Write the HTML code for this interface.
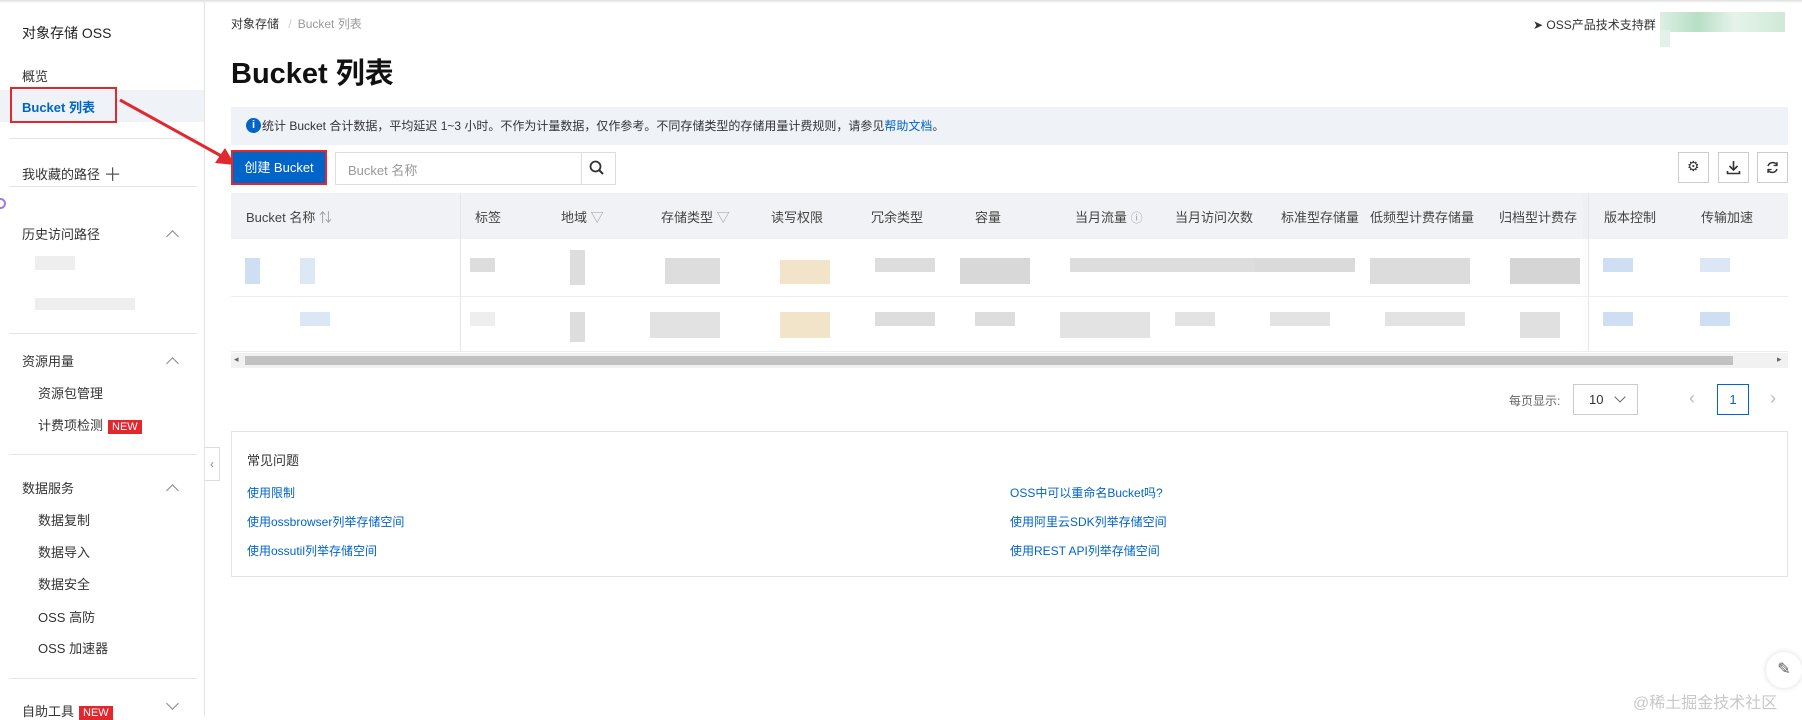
<!DOCTYPE html>
<html><head><meta charset="utf-8"><style>
*{margin:0;padding:0;box-sizing:border-box}
body{width:1802px;height:716px;overflow:hidden;background:#fff;font-family:"Liberation Sans","Noto Sans CJK SC",sans-serif;font-size:13px;color:#333;position:relative}
.a{position:absolute;white-space:nowrap}
.side{position:absolute;left:0;top:0;width:205px;height:716px;border-right:1px solid #e3e3e3}
.hr{position:absolute;left:9px;width:188px;height:1px;background:#e5e5e5}
.new{background:#e0282e;color:#fff;font-size:11px;padding:0 4px;margin-left:5px;line-height:14px;display:inline-block}
.chev{position:absolute;left:168px;width:9px;height:9px;border-left:1.3px solid #888;border-top:1.3px solid #888;transform:rotate(45deg)}
.chevd{transform:rotate(225deg)}
.blk{position:absolute;background:#ddd}
a{color:#0064c8;text-decoration:none}
.ib{position:absolute;top:152px;width:31px;height:31px;border:1px solid #ccc;background:#fff}
</style></head><body>
<div class="a" style="left:0;top:0;width:1802px;height:3px;background:linear-gradient(#ddd,#fff)"></div>
<div class="side">
<div class="a" style="left:22px;top:23px;font-size:14px;color:#222">对象存储 OSS</div>
<div class="a" style="left:22px;top:66px;color:#333">概览</div>
<div class="a" style="left:0;top:90px;width:204px;height:32px;background:#eff3f8"></div>
<div class="a" style="left:10px;top:87px;width:107px;height:36px;border:2px solid #e0282e"></div>
<div class="a" style="left:22px;top:97px;color:#0064c8;font-weight:bold">Bucket 列表</div>
<div class="hr" style="top:138px"></div>
<div class="a" style="left:22px;top:161px">我收藏的路径 <span style="font-size:18px;color:#555;vertical-align:-2px">＋</span></div>
<div class="hr" style="top:186px"></div>
<div class="a" style="left:22px;top:224px">历史访问路径</div><div class="chev" style="top:232px"></div>
<div class="blk" style="left:35px;top:256px;width:40px;height:14px;background:#eee"></div>
<div class="blk" style="left:35px;top:298px;width:100px;height:12px;background:#eee"></div>
<div class="hr" style="top:333px"></div>
<div class="a" style="left:22px;top:351px">资源用量</div><div class="chev" style="top:359px"></div>
<div class="a" style="left:38px;top:383px">资源包管理</div>
<div class="a" style="left:38px;top:415px">计费项检测<span class="new">NEW</span></div>
<div class="hr" style="top:454px"></div>
<div class="a" style="left:22px;top:478px">数据服务</div><div class="chev" style="top:486px"></div>
<div class="a" style="left:38px;top:510px">数据复制</div>
<div class="a" style="left:38px;top:542px">数据导入</div>
<div class="a" style="left:38px;top:574px">数据安全</div>
<div class="a" style="left:38px;top:607px">OSS 高防</div>
<div class="a" style="left:38px;top:638px">OSS 加速器</div>
<div class="hr" style="top:678px"></div>
<div class="a" style="left:22px;top:701px">自助工具<span class="new">NEW</span></div><div class="chev chevd" style="top:699px"></div>
</div>
<div class="a" style="left:205px;top:447px;width:15px;height:34px;border:1px solid #ddd;border-left:none;background:#fff;color:#888;font-size:12px;text-align:center;line-height:32px">‹</div>
<div class="a" style="left:-5px;top:198px;width:11px;height:11px;border:2px solid #9b7bea;border-radius:50%"></div>
<!-- red arrow -->
<svg class="a" style="left:115px;top:95px" width="125" height="75"><line x1="5" y1="5" x2="110" y2="63" stroke="#e0282e" stroke-width="3"/><polygon points="120,70 100,68 110,53" fill="#e0282e"/></svg>

<div class="a" style="left:231px;top:15px;font-size:12px;color:#333">对象存储 <span style="color:#ccc;margin:0 6px">/</span><span style="color:#999">Bucket 列表</span></div>
<div class="a" style="left:231px;top:50px;font-size:29px;font-weight:bold;color:#111">Bucket 列表</div>
<div class="a" style="left:1533px;top:16px;font-size:12px;color:#333">➤ OSS产品技术支持群</div>
<div class="a" style="left:1660px;top:12px;width:125px;height:20px;background:linear-gradient(90deg,#dcefe3,#b7dfc6 30%,#e6f3ea 60%,#cfe9d8)"></div>
<div class="a" style="left:1660px;top:30px;width:10px;height:17px;background:#e3f2e8"></div>

<div class="a" style="left:231px;top:107px;width:1557px;height:38px;background:#eff3f8"></div>
<div class="a" style="left:246px;top:118px;width:15px;height:15px;border-radius:50%;background:#0064c8;color:#fff;font-size:11px;font-weight:bold;text-align:center;line-height:15px">i</div>
<div class="a" style="left:262px;top:117px;font-size:12px;color:#333">统计 Bucket 合计数据，平均延迟 1~3 小时。不作为计量数据，仅作参考。不同存储类型的存储用量计费规则，请参见<a>帮助文档</a>。</div>

<div class="a" style="left:231px;top:150px;width:96px;height:35px;border:2px solid #e0282e;background:#0064c8;padding:2px"></div>
<div class="a" style="left:231px;top:150px;width:96px;height:35px;color:#fff;text-align:center;line-height:35px;font-size:13px">创建 Bucket</div>
<div class="a" style="left:335px;top:152px;width:281px;height:33px;border:1px solid #ddd"></div>
<div class="a" style="left:348px;top:160px;color:#999">Bucket 名称</div>
<div class="a" style="left:581px;top:152px;width:1px;height:33px;background:#ddd"></div>
<svg class="a" style="left:589px;top:160px" width="16" height="16"><circle cx="6.5" cy="6.5" r="5" fill="none" stroke="#333" stroke-width="1.8"/><line x1="10" y1="10" x2="14" y2="14" stroke="#333" stroke-width="2"/></svg>
<div class="ib" style="left:1678px"></div><div class="ib" style="left:1718px"></div><div class="ib" style="left:1757px"></div>
<div class="a" style="left:1687px;top:158px;font-size:14px;color:#333">⚙</div>
<svg class="a" style="left:1726px;top:160px" width="15" height="15"><path d="M7.5 1v9M3.5 6l4 4 4-4M1.5 11v2.5h12V11" fill="none" stroke="#333" stroke-width="1.6"/></svg>
<svg class="a" style="left:1765px;top:160px" width="15" height="15"><path d="M12 5a5 5 0 0 0-9 1M3 10a5 5 0 0 0 9-1" fill="none" stroke="#333" stroke-width="1.5"/><path d="M12 2v3.5H8.5M3 13V9.5h3.5" fill="none" stroke="#333" stroke-width="1.3"/></svg>

<div class="a" style="left:231px;top:193px;width:1557px;height:46px;background:#f0f2f5"></div>
<div class="a" style="left:460px;top:193px;width:1px;height:158px;background:#e6e6e6"></div>
<div class="a" style="left:1588px;top:193px;width:1px;height:158px;background:#e6e6e6;box-shadow:-3px 0 4px rgba(0,0,0,.06)"></div>
<div class="a" style="left:231px;top:207px;width:1557px;font-size:13px;color:#444">
<span class="a" style="left:15px">Bucket 名称 <span style="color:#999">⇅</span></span>
<span class="a" style="left:244px">标签</span><span class="a" style="left:330px">地域 <span style="color:#999">▽</span></span>
<span class="a" style="left:430px">存储类型 <span style="color:#999">▽</span></span><span class="a" style="left:540px">读写权限</span>
<span class="a" style="left:640px">冗余类型</span><span class="a" style="left:744px">容量</span>
<span class="a" style="left:844px">当月流量 <span style="color:#999;font-size:12px">ⓘ</span></span><span class="a" style="left:944px">当月访问次数</span>
<span class="a" style="left:1050px">标准型存储量</span><span class="a" style="left:1139px">低频型计费存储量</span>
<span class="a" style="left:1268px">归档型计费存</span><span class="a" style="left:1373px">版本控制</span><span class="a" style="left:1470px">传输加速</span>
</div>
<div class="a" style="left:231px;top:296px;width:1557px;height:1px;background:#eee"></div>
<div class="a" style="left:231px;top:351px;width:1557px;height:1px;background:#eee"></div>
<!-- blurred cells -->
<div class="blk" style="left:245px;top:258px;width:15px;height:26px;background:#cfdff3"></div>
<div class="blk" style="left:300px;top:258px;width:15px;height:26px;background:#dde8f5"></div>
<div class="blk" style="left:300px;top:312px;width:30px;height:14px;background:#dbe7f5"></div>
<div class="blk" style="left:470px;top:258px;width:25px;height:14px;background:#ddd"></div>
<div class="blk" style="left:470px;top:312px;width:25px;height:14px;background:#eee"></div>
<div class="blk" style="left:570px;top:250px;width:15px;height:35px;background:#ddd"></div>
<div class="blk" style="left:570px;top:312px;width:15px;height:30px;background:#ddd"></div>
<div class="blk" style="left:665px;top:258px;width:55px;height:26px;background:#ddd"></div>
<div class="blk" style="left:650px;top:312px;width:70px;height:26px;background:#e2e2e2"></div>
<div class="blk" style="left:780px;top:260px;width:50px;height:24px;background:#f2e4c8"></div>
<div class="blk" style="left:780px;top:312px;width:50px;height:26px;background:#f2e4c8"></div>
<div class="blk" style="left:875px;top:258px;width:60px;height:14px;background:#ddd"></div>
<div class="blk" style="left:875px;top:312px;width:60px;height:14px;background:#ddd"></div>
<div class="blk" style="left:960px;top:258px;width:70px;height:26px;background:#d8d8d8"></div>
<div class="blk" style="left:975px;top:312px;width:40px;height:14px;background:#ddd"></div>
<div class="blk" style="left:1070px;top:258px;width:90px;height:14px;background:#ddd"></div>
<div class="blk" style="left:1060px;top:312px;width:90px;height:26px;background:#e3e3e3"></div>
<div class="blk" style="left:1160px;top:258px;width:100px;height:14px;background:#ddd"></div>
<div class="blk" style="left:1175px;top:312px;width:40px;height:14px;background:#e3e3e3"></div>
<div class="blk" style="left:1255px;top:258px;width:100px;height:14px;background:#dadada"></div>
<div class="blk" style="left:1270px;top:312px;width:60px;height:14px;background:#e3e3e3"></div>
<div class="blk" style="left:1370px;top:258px;width:100px;height:26px;background:#dcdcdc"></div>
<div class="blk" style="left:1385px;top:312px;width:80px;height:14px;background:#e3e3e3"></div>
<div class="blk" style="left:1510px;top:258px;width:70px;height:26px;background:#d5d5d5"></div>
<div class="blk" style="left:1520px;top:312px;width:40px;height:26px;background:#e0e0e0"></div>
<div class="blk" style="left:1603px;top:258px;width:30px;height:14px;background:#cfdff3"></div>
<div class="blk" style="left:1603px;top:312px;width:30px;height:14px;background:#cfdff3"></div>
<div class="blk" style="left:1700px;top:258px;width:30px;height:14px;background:#dbe7f5"></div>
<div class="blk" style="left:1700px;top:312px;width:30px;height:14px;background:#cfdff3"></div>
<!-- scrollbar -->
<div class="a" style="left:231px;top:353px;width:1557px;height:15px;background:#f1f1f1"></div>
<div class="a" style="left:245px;top:356px;width:1488px;height:9px;background:#c1c1c1"></div>
<div class="a" style="left:234px;top:354px;font-size:9px;color:#666">◂</div>
<div class="a" style="left:1777px;top:354px;font-size:9px;color:#666">▸</div>
<!-- pagination -->
<div class="a" style="left:1509px;top:392px;font-size:12px;color:#666">每页显示:</div>
<div class="a" style="left:1573px;top:384px;width:65px;height:31px;border:1px solid #ccc"></div>
<div class="a" style="left:1589px;top:392px;color:#333">10</div>
<div class="a" style="left:1616px;top:393px;width:8px;height:8px;border-right:1.3px solid #666;border-bottom:1.3px solid #666;transform:rotate(45deg)"></div>
<div class="a" style="left:1689px;top:388px;font-size:18px;color:#bbb">‹</div>
<div class="a" style="left:1717px;top:384px;width:32px;height:31px;border:1px solid #0064c8;color:#0064c8;text-align:center;line-height:29px">1</div>
<div class="a" style="left:1770px;top:388px;font-size:18px;color:#bbb">›</div>
<!-- FAQ -->
<div class="a" style="left:231px;top:431px;width:1557px;height:146px;border:1px solid #e3e3e3"></div>
<div class="a" style="left:247px;top:450px;font-size:13px;color:#333">常见问题</div>
<div class="a" style="left:247px;top:484px;font-size:12px"><a>使用限制</a></div>
<div class="a" style="left:247px;top:513px;font-size:12px"><a>使用ossbrowser列举存储空间</a></div>
<div class="a" style="left:247px;top:542px;font-size:12px"><a>使用ossutil列举存储空间</a></div>
<div class="a" style="left:1010px;top:484px;font-size:12px"><a>OSS中可以重命名Bucket吗?</a></div>
<div class="a" style="left:1010px;top:513px;font-size:12px"><a>使用阿里云SDK列举存储空间</a></div>
<div class="a" style="left:1010px;top:542px;font-size:12px"><a>使用REST API列举存储空间</a></div>
<div class="a" style="left:1766px;top:652px;width:36px;height:36px;border-radius:50%;background:#fff;box-shadow:0 0 6px rgba(0,0,0,.15);text-align:center;line-height:36px;color:#555;font-size:16px">✎</div>
<div class="a" style="left:1633px;top:689px;font-size:16px;color:#c8c8c8">@稀土掘金技术社区</div>
</body></html>
